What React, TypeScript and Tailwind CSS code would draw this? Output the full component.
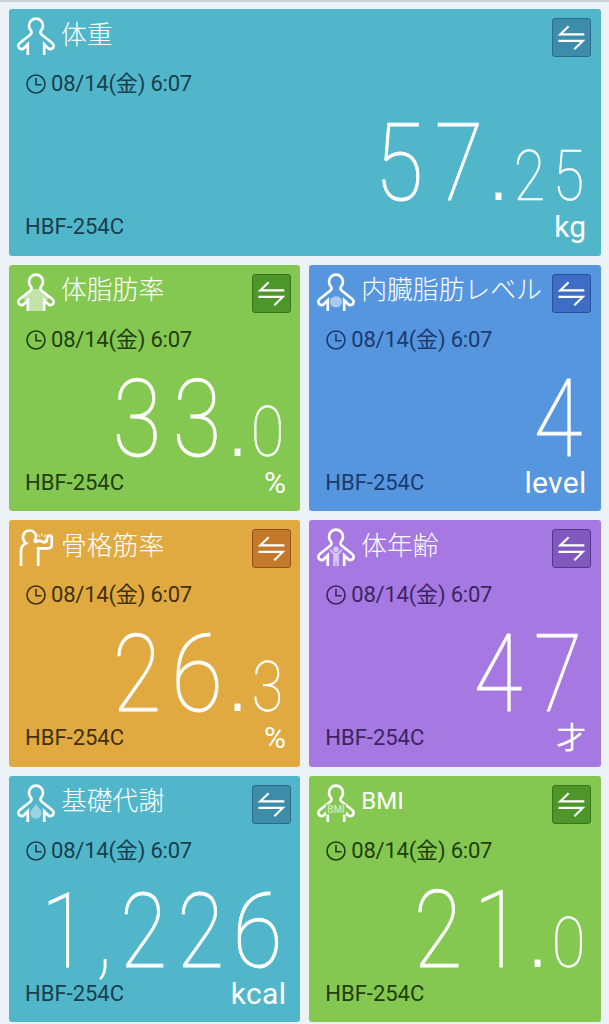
import React from "react";

type IconKind = "weight" | "fat" | "visceral" | "muscle" | "age" | "metabolism" | "bmi";

interface CardData {
  kind: IconKind;
  title: string;
  whole: string;
  decimal?: string;
  unit?: string;
  card: string;
  ink: string;
  button: string;
  wide?: boolean;
}

const teal = { card: "bg-[#52b6cb]", ink: "text-[#17404c]", button: "bg-[#3c8caa] border-[#2c6c8a]" };
const green = { card: "bg-[#84c851]", ink: "text-[#1f3d0d]", button: "bg-[#4c962a] border-[#3a751c]" };
const blue = { card: "bg-[#5596df]", ink: "text-[#1b3a70]", button: "bg-[#3d6dc4] border-[#2c4f9c]" };
const orange = { card: "bg-[#e0aa40]", ink: "text-[#40300e]", button: "bg-[#c4782a] border-[#96501a]" };
const purple = { card: "bg-[#a578e2]", ink: "text-[#3c2560]", button: "bg-[#8058be] border-[#57378c]" };

const cards: CardData[] = [
  { kind: "weight", title: "体重", whole: "57", decimal: "25", unit: "kg", wide: true, ...teal },
  { kind: "fat", title: "体脂肪率", whole: "33", decimal: "0", unit: "%", ...green },
  { kind: "visceral", title: "内臓脂肪レベル", whole: "4", unit: "level", ...blue },
  { kind: "muscle", title: "骨格筋率", whole: "26", decimal: "3", unit: "%", ...orange },
  { kind: "age", title: "体年齢", whole: "47", unit: "才", ...purple },
  { kind: "metabolism", title: "基礎代謝", whole: "1,226", unit: "kcal", ...teal },
  { kind: "bmi", title: "BMI", whole: "21", decimal: "0", ...green },
];

const bodyPath =
  "M10.8 38V27.3L6.8 31.2C4.9 33 1.3 31.6 1.3 28.8C1.3 27.5 2 26.6 3.1 25.7L13.2 17.8C14.6 16.7 14.9 15.5 14.1 13.7A7 7 0 1 1 23.9 13.7C23.1 15.5 23.4 16.7 24.8 17.8L34.9 25.7C36 26.6 36.7 27.5 36.7 28.8C36.7 31.6 33.1 33 31.2 31.2L27.2 27.3V38";

function BodyIcon({ kind }: { kind: IconKind }) {
  if (kind === "muscle") {
    return (
      <svg viewBox="0 0 38 38" className="size-[38px] shrink-0" fill="none" stroke="white" strokeWidth="2.7">
        <path d="M4 38V23C4 19 5.5 16.6 9 15.2C6.4 13.2 5.5 10.7 6.1 7.8C6.9 4.5 9.5 2.5 12.6 2.5C16 2.5 18.8 5 19 8.3C19.1 10.5 18.6 12 17 13.6" />
        <path d="M21.2 38V20.3H30.8C33.4 20.3 34.8 18.8 34.8 16.2V9.6C34.8 7 30.4 7 30.2 9.4L29.8 13" />
        <path d="M17.5 13.8C19.5 14 20.8 12.6 22.4 12.6C24.2 12.6 24.8 14.2 26.8 14.2C28.4 14.2 29.2 13.6 30.2 12.8" strokeWidth="2.9" />
        <path d="M22.4 9L21.2 6.6M25 8.2L24.8 5.2M27.4 9L28.4 6.6" strokeWidth="1" />
      </svg>
    );
  }
  return (
    <svg viewBox="0 0 38 38" className="size-[38px] shrink-0" fill="none">
      {kind === "fat" && <path d="M14 16L5 25L10 28V38H28V28L33 25L24 16Z" fill="white" fillOpacity=".5" />}
      {kind === "visceral" && <ellipse cx="19" cy="28.8" rx="6" ry="5.6" fill="white" fillOpacity=".5" />}
      {kind === "metabolism" && (
        <path d="M19 19.5C20 22.5 24.6 25 24.6 29A5.6 5.6 0 0 1 13.4 29C13.4 25 18.3 23.5 19 19.5Z" fill="white" fillOpacity=".42" />
      )}
      {kind === "age" && (
        <g opacity=".58" stroke="white">
          <circle cx="19" cy="21.4" r="2.8" fill="white" stroke="none" />
          <path d="M13.2 21.2L16.4 25.6H21.6L24.8 21.2" strokeWidth="1.8" />
          <path d="M19 25V33" strokeWidth="5.6" />
          <path d="M17.4 32V38M20.6 32V38" strokeWidth="2.4" />
        </g>
      )}
      <path d={bodyPath} stroke="white" strokeWidth="2.7" />
      {kind === "bmi" && (
        <>
          <rect x="9" y="20.5" width="20" height="10" className="fill-[#84c851]" />
          <text x="19" y="29" textAnchor="middle" textLength="17.5" lengthAdjust="spacingAndGlyphs" fill="#d0ebbb" className="font-['Roboto',sans-serif] text-[10.5px] font-medium">
            BMI
          </text>
        </>
      )}
    </svg>
  );
}

function SwapButton({ tone }: { tone: string }) {
  return (
    <button type="button" aria-label="切り替え" className={`ml-auto mt-px size-[39px] shrink-0 rounded-[3px] border ${tone}`}>
      <svg viewBox="1 1 37 37" className="size-[37px]" fill="none" stroke="white" strokeWidth="2.1">
        <path d="M16.6 8.2L8.2 16.4H32.3M6.4 22.9H30.8L22.3 31.3" />
      </svg>
    </button>
  );
}

function Clock() {
  return (
    <svg viewBox="0 0 20 20" className="size-5 shrink-0" fill="none" stroke="currentColor" strokeWidth="1.6">
      <circle cx="10" cy="10" r="9" />
      <path d="M10 4V10.7H15.6" />
    </svg>
  );
}

function Digits({ value, cell, stroke }: { value: string; cell: string; stroke: string }) {
  return (
    <>
      {value.split("").map((char, i) =>
        char === "," ? (
          <span key={i} className="inline-block w-[22px] text-center">
            ,
          </span>
        ) : (
          <span key={i} className={`flex justify-center ${cell} ${stroke} ${char === "6" || char === "0" ? "scale-x-[.88]" : "scale-x-[.82]"}`}>
            {char}
          </span>
        ),
      )}
    </>
  );
}

function Reading({ whole, decimal }: { whole: string; decimal?: string }) {
  const long = whole.length > 3;
  return (
    <div className={`mt-3 flex h-[108px] items-baseline justify-end font-['Roboto',sans-serif] text-white ${long ? "pt-0.5 pr-3.5" : "pr-[13px]"}`}>
      <span className={`flex leading-[108px] font-thin ${long ? "text-[104px]" : "text-[108px]"}`}>
        <Digits value={whole} cell={long ? "w-[57px]" : "w-[60px]"} stroke="[-webkit-text-stroke:0.9px_white]" />
      </span>
      {decimal && (
        <>
          <span className="w-[21px] text-center font-['Liberation_Sans',sans-serif] text-[68px] leading-none">
            <span className="-ml-px inline-block scale-x-[.9]">.</span>
          </span>
          <span className="flex text-[70px] leading-none font-thin">
            <Digits value={decimal} cell="w-[39px]" stroke="[-webkit-text-stroke:0.4px_white]" />
          </span>
        </>
      )}
    </div>
  );
}

function MetricCard({ data }: { data: CardData }) {
  return (
    <section className={`flex h-[246.5px] flex-col overflow-hidden rounded-[3px] ${data.card} ${data.wide ? "col-span-2" : ""}`}>
      <header className="flex h-[62px] items-start pt-2 pr-[9.5px] pl-2 text-white">
        <BodyIcon kind={data.kind} />
        {data.kind === "bmi" ? (
          <h2 className="ml-[6px] font-['Roboto',sans-serif] text-[24px] leading-[34px] font-normal">{data.title}</h2>
        ) : (
          <h2 className="-mt-[1.5px] ml-1.5 font-['Noto_Sans_CJK_JP',sans-serif] text-[25.8px] leading-[34px] font-light whitespace-nowrap">
            {data.title}
          </h2>
        )}
        <SwapButton tone={data.button} />
      </header>
      <div className={`flex h-[26px] items-center gap-[5px] pl-[17px] ${data.ink}`}>
        <Clock />
        <time className="font-['Roboto','Noto_Sans_CJK_JP',sans-serif] text-[22px] leading-[26px] tracking-[-0.2px] whitespace-nowrap">
          08/14(金) 6:07
        </time>
      </div>
      <Reading whole={data.whole} decimal={data.decimal} />
      <footer className="-mt-2 flex h-9 items-start justify-between pr-3.5 pl-4 font-['Roboto','Noto_Sans_CJK_JP',sans-serif]">
        <span className={`text-[22px] leading-9 ${data.ink}`}>HBF-254C</span>
        <span className="text-[30px] leading-9 tracking-[0.3px] text-white">{data.unit}</span>
      </footer>
    </section>
  );
}

export default function App() {
  return (
    <main className="h-[1024px] w-[609px] overflow-hidden border-t-2 border-[#ccd1d5] bg-[#edf2f6] pt-[7px] pr-[8.5px] pl-[9px]">
      <div className="grid grid-cols-2 gap-x-[9px] gap-y-[9px]">
        {cards.map((data) => (
          <MetricCard key={data.kind} data={data} />
        ))}
      </div>
    </main>
  );
}
